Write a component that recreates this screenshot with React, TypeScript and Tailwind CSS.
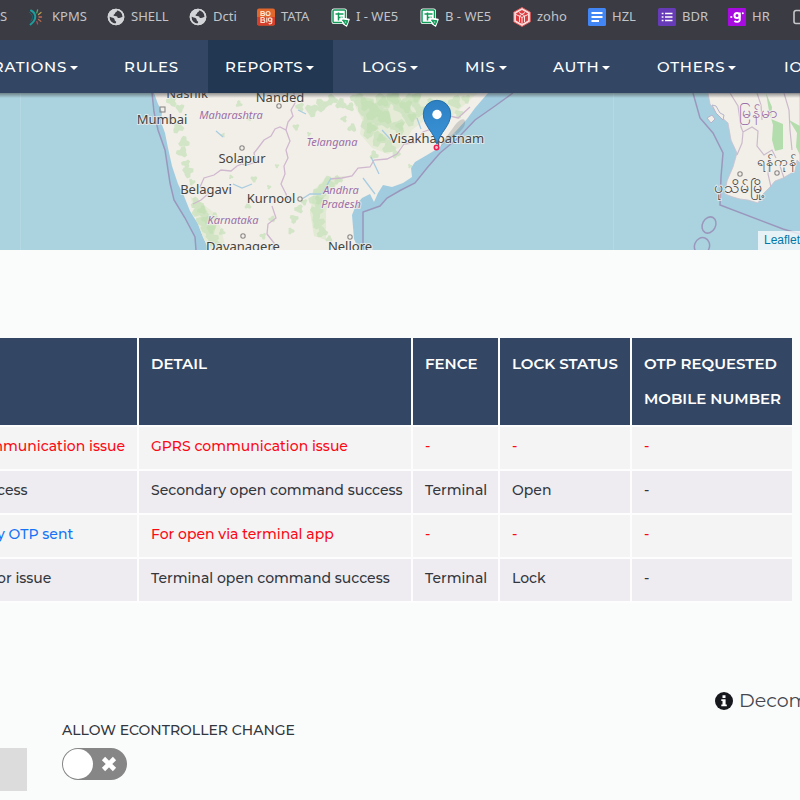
import React from "react";

const GlobeIcon = () => (
  <svg viewBox="0 0 18 18" className="h-[18px] w-[18px]" aria-hidden="true">
    <circle cx="9" cy="9" r="8.300" fill="#d3d4d7" />
    <path
      d="M9.500 1.800C10.800 2.600 10 3.800 8.800 4.200 7.600 4.800 8.400 6 7 6.600 6 7.200 6.400 8 8 7.900 10 7.900 10.800 8.600 10.700 9.900 12.600 9.900 13.800 9.900 16 8.400 15.800 6 14.500 3.500 12 2.600ZM2.500 8.600C3.600 9.600 5.600 9.400 6.800 10.300 8.200 11.200 7 12.600 8.600 13.300 9.800 14 9 15 8.200 15.700 5 15.500 2.200 12.600 2.500 8.600Z"
      fill="#3b3c44"
    />
    <circle cx="9" cy="9" r="7.500" fill="none" stroke="#d3d4d7" strokeWidth="1.700" />
  </svg>
);

const SunIcon = () => (
  <svg viewBox="0 0 18 18" className="h-[18px] w-[18px]" aria-hidden="true" fill="none" strokeLinecap="round">
    <path d="M3 2.500C8 5 9.500 11 2.500 16.500" stroke="#1f9c9c" strokeWidth="2" />
    <path d="M1.500 4.500C5 7 5.500 10 3 13" stroke="#176c78" strokeWidth="1" />
    <path d="M8.800 4.800L9.600 1.800" stroke="#4fae6c" strokeWidth="1.300" />
    <path d="M10.500 6.500L13 4.500" stroke="#b9a04c" strokeWidth="1.300" />
    <path d="M11 9H13.500" stroke="#c96a55" strokeWidth="1.300" />
    <path d="M10.500 11.500L12.800 13.300" stroke="#b9694c" strokeWidth="1.300" />
    <path d="M8.800 13.500L9.600 16" stroke="#a7505a" strokeWidth="1.300" />
  </svg>
);

const TataIcon = () => (
  <svg viewBox="0 0 18 18" className="h-[18px] w-[18px]" aria-hidden="true">
    <rect width="18" height="17" y="0.500" rx="2" fill="#e2672c" />
    <path d="M0 9H18V15.500a2 2 0 0 1-2 2H2a2 2 0 0 1-2-2Z" fill="#d63f2b" />
    <g fill="none" stroke="#fde3cf" strokeWidth="1.200">
      <path d="M4 3.500V7.500H6.500C8 7.500 8 5.500 6.500 5.500H4 6.300C7.600 5.500 7.600 3.500 6.300 3.500Z" />
      <circle cx="11" cy="5.500" r="2" />
      <path d="M4 9.500V14.500H6.500C8.300 14.500 8.300 12 6.500 12H4 6.200C7.700 12 7.700 9.500 6.200 9.500ZM9.800 9.500V14.500" />
      <circle cx="13" cy="11.600" r="1.700" />
      <path d="M14.700 10V14.500C14.700 16 12.400 16 11.700 15.400" />
    </g>
  </svg>
);

const SheetIcon = () => (
  <svg viewBox="0 0 19 19" className="h-[19px] w-[19px]" aria-hidden="true">
    <rect x="0.500" y="0.500" width="15.500" height="15.500" rx="2.500" fill="#fff" />
    <rect x="2" y="2" width="12.500" height="12.500" rx="1" fill="none" stroke="#119a58" strokeWidth="1.500" />
    <path d="M4.500 6H12.500M7.500 4.500V12.500M7.500 9.500H12" stroke="#119a58" strokeWidth="1.500" />
    <path d="M10 10L18 11.500 15.500 18 12.500 16Z" fill="#fff" stroke="#fff" strokeWidth="1.500" strokeLinejoin="round" />
    <path d="M11.500 12L17 12.800 15 17Z" fill="#119a58" stroke="#119a58" strokeWidth="1" strokeLinejoin="round" />
    <path d="M13.700 13.500L15.400 13.700 14.900 15Z" fill="#fff" />
  </svg>
);

const ZohoIcon = () => (
  <svg viewBox="0 0 18 20" className="h-5 w-[18px]" aria-hidden="true">
    <path d="M9 .5L17.300 5.200V14.800L9 19.500.7 14.800V5.200Z" fill="#f8dcdc" stroke="#e25555" strokeWidth="1" />
    <path d="M9 3L15 6.500V13.500L9 17 3 13.500V6.500Z" fill="#dc3b3f" />
    <path d="M3 7.500L9 10.500 15 7.500M9 10.500V17M6 5.500L11.500 8.800V15M12 5.500L6.500 8.800V15" fill="none" stroke="#fbe4e4" strokeWidth="1" />
  </svg>
);

const DocIcon = () => (
  <svg viewBox="0 0 18 18" className="h-[18px] w-[18px]" aria-hidden="true">
    <rect width="18" height="18" rx="1.500" fill="#4285f4" />
    <path d="M3.500 5H14.500M3.500 9H14.500M3.500 13H11" stroke="#fff" strokeWidth="2" />
  </svg>
);

const FormIcon = () => (
  <svg viewBox="0 0 18 18" className="h-[18px] w-[18px]" aria-hidden="true">
    <rect width="18" height="18" rx="1.500" fill="#673ab7" />
    <path d="M7 5.500H14.500M7 9H14.500M7 12.500H14.500M3.700 5.500H5.500M3.700 9H5.500M3.700 12.500H5.500" stroke="#fff" strokeWidth="1.700" />
  </svg>
);

const HrIcon = () => (
  <svg viewBox="0 0 18 18" className="h-[18px] w-[18px]" aria-hidden="true">
    <rect width="18" height="18" rx="1" fill="#a70be0" />
    <circle cx="9" cy="7.500" r="2.500" fill="none" stroke="#fff" strokeWidth="2" />
    <path d="M11.800 4.500V11.500C11.800 14.500 7.500 14.300 6.500 12.700" fill="none" stroke="#fff" strokeWidth="1.900" />
    <circle cx="3.300" cy="9" r="1.100" fill="#fff" />
    <circle cx="14.800" cy="5.300" r="1" fill="#fff" />
  </svg>
);

const FolderIcon = () => (
  <svg viewBox="0 0 18 18" className="h-[18px] w-[18px]" aria-hidden="true">
    <path d="M1 4.500a2 2 0 0 1 2-2H7L9 4.500H15a2 2 0 0 1 2 2V13.500a2 2 0 0 1-2 2H3a2 2 0 0 1-2-2Z" fill="none" stroke="#c6c7ca" strokeWidth="1.600" />
  </svg>
);

const bookmarks = [
  { label: "KPMS", icon: <SunIcon />, width: "w-[79px]" },
  { label: "SHELL", icon: <GlobeIcon />, width: "w-[82px]" },
  { label: "Dcti", icon: <GlobeIcon />, width: "w-[68px]" },
  { label: "TATA", icon: <TataIcon />, width: "w-[74px]" },
  { label: "I - WE5", icon: <SheetIcon />, width: "w-[89px]" },
  { label: "B - WE5", icon: <SheetIcon />, width: "w-[93px]" },
  { label: "zoho", icon: <ZohoIcon />, width: "w-[75px]" },
  { label: "HZL", icon: <DocIcon />, width: "w-[70px]" },
  { label: "BDR", icon: <FormIcon />, width: "w-[70px]" },
  { label: "HR", icon: <HrIcon />, width: "w-[65px]" },
  { label: "", icon: <FolderIcon />, width: "w-[18px]" },
];

const navItems = [
  { label: "RATIONS", caret: true, active: false, width: "w-[123px]" },
  { label: "RULES", caret: false, active: false, width: "w-[89px]" },
  { label: "REPORTS", caret: true, active: true, width: "w-[125px]" },
  { label: "LOGS", caret: true, active: false, width: "w-[91px]" },
  { label: "MIS", caret: true, active: false, width: "w-[76px]" },
  { label: "AUTH", caret: true, active: false, width: "w-[92px]" },
  { label: "OTHERS", caret: true, active: false, width: "w-[115px]" },
  { label: "IO", caret: false, active: false, width: "w-[66px]" },
];

const events = [
  { event: "mmunication issue", detail: "GPRS communication issue", fence: "-", lock: "-", otp: "-", alert: true, tone: "text-[#fb0a14]" },
  { event: "cess", detail: "Secondary open command success", fence: "Terminal", lock: "Open", otp: "-", alert: false, tone: "" },
  { event: "y OTP sent", detail: "For open via terminal app", fence: "-", lock: "-", otp: "-", alert: true, tone: "text-[#1573f6]" },
  { event: "or issue", detail: "Terminal open command success", fence: "Terminal", lock: "Lock", otp: "-", alert: false, tone: "" },
];

/* Small irregular patches of woodland; each is [x, y, size]. */
const woods: number[][] = [
  [172, 101, 5], [180, 108, 4], [170, 120, 3], [178, 128, 5], [184, 142, 5], [182, 152, 5], [186, 164, 4], [188, 172, 5], [192, 182, 3],
  [196, 203, 5], [200, 211, 7], [204, 221, 7], [209, 230, 7], [212, 239, 6], [218, 246, 5], [222, 232, 3], [214, 217, 4],
  [300, 107, 4], [312, 110, 6], [322, 105, 6], [332, 100, 5], [341, 104, 5], [350, 107, 4], [357, 99, 6], [364, 105, 9], [372, 113, 11],
  [381, 103, 8], [392, 99, 9], [404, 107, 9], [414, 99, 7], [369, 129, 8], [379, 139, 7], [389, 147, 6], [383, 119, 9], [398, 127, 7],
  [410, 118, 7], [420, 110, 6], [431, 104, 5], [443, 108, 6], [455, 102, 6], [466, 99, 4], [459, 114, 4], [396, 154, 4], [374, 155, 4],
  [352, 128, 4], [344, 119, 3], [296, 127, 3], [309, 134, 2], [338, 180, 4], [328, 183, 6], [320, 191, 6], [317, 201, 7], [317, 212, 6],
  [318, 222, 6], [322, 232, 5], [329, 239, 3], [299, 209, 4], [304, 202, 3], [294, 219, 4], [291, 231, 3], [239, 104, 3], [249, 119, 2],
  [223, 135, 2], [254, 179, 3], [269, 187, 2], [231, 177, 2], [248, 206, 3], [272, 219, 3], [263, 236, 3], [277, 166, 2], [410, 166, 2],
];

const patch = ([x, y, r]: number[], i: number) => {
  const points: string[] = [];
  for (let k = 0; k < 11; k++) {
    const angle = (k / 11) * Math.PI * 2;
    const reach = r * (0.55 + 0.75 * Math.abs(Math.sin(i * 3.7 + k * 2.3)));
    points.push(`${(x + Math.cos(angle) * reach).toFixed(1)},${(y + Math.sin(angle) * reach).toFixed(1)}`);
  }
  return points.join(" ");
};

const halo = { paintOrder: "stroke" as const };

const MapView = () => (
  <section aria-label="Vehicle map" className="relative h-[157px] overflow-hidden bg-[#aad3df]">
    <svg viewBox="0 93 800 157" className="block h-[157px] w-[800px] max-w-none" fontFamily="'Noto Sans', 'Open Sans', sans-serif" fontSize="13">
      <defs>
        <linearGradient id="pin" x1="0" y1="0" x2="0" y2="1">
          <stop offset="0" stopColor="#2d80c2" />
          <stop offset="1" stopColor="#3a94d8" />
        </linearGradient>
        <linearGradient id="navShade" x1="0" y1="0" x2="0" y2="1">
          <stop offset="0" stopColor="#333" stopOpacity="0.5" />
          <stop offset="1" stopColor="#333" stopOpacity="0" />
        </linearGradient>
        <clipPath id="indiaLand">
          <path d="M154 93L158 104 162 112 161 122 165 133 168 148 172 166 178 184 184 196 190 211 198 224 203 237 209 250H359L354 239 352 215 356 205 362 198 370 194 374 202 378 193 383 185 392 187 403 183 412 177 411 168 415 162 427 155 437 149 447 140 457 130 467 119 475 108 488 93Z" />
        </clipPath>
      </defs>
      <path d="M20.500 93V250M613.500 93V250" stroke="#b4d9e4" strokeWidth="1" />
      <path d="M152 93L158 130 165 150 170 183 174 200 185 218 195 237 196 250H363V212L380 206 387 198 415 183 440 153 475 120 513 93" fill="#a1cce0" />
      <path d="M693 93L700 118 713 133 723 153 721 177 720 205 783 229 800 234V93Z" fill="#a6d0df" />
      <g clipPath="url(#indiaLand)">
        <rect x="140" y="90" width="360" height="162" fill="#f2efe9" />
        <path d="M356 93L354 104 362 120 360 134 372 148 388 154 402 146 412 130 428 118 452 116 478 93Z" fill="#e6ecd8" />
        <path d="M190 196L200 202 216 214 222 232 226 250H205Z" fill="#e6ecd8" />
        <path d="M345 176L326 178 314 190 310 212 314 236 326 240 326 212 330 192Z" fill="#e2ead3" />
        <g fill="#cbe3be" opacity="0.800">
          {woods.map((w, i) => (
            <polygon key={i} points={patch(w, i)} />
          ))}
        </g>
        <g fill="#bcdcae" opacity="0.500">
          {woods.filter((w) => w[2] > 6).map((w, i) => (
            <polygon key={i} points={patch([w[0] + 2, w[1] - 1, w[2] - 3], i + 5)} />
          ))}
        </g>
        <g fill="none" stroke="#d0b8cf" strokeWidth="1.300">
          <path d="M294 93L295 103 291 110 293 116 288 122 286 130 280 127 275 129 271 136 264 140 258 148 254 153 256 162 246 165 242 164 237 166 231 171 221 170 214 175 204 178 200 187 208 194 201 200 193 204" />
          <path d="M286 130L290 141 286 150 288 158 284 166 285 174 281 184 286 194 288 200M272 206L276 218 268 224 267 234 274 243 272 250" />
          <path d="M330 179L342 178 352 176 358 168 370 167 374 160 387 159 397 154 404 144 415 143 423 132 434 128 446 115 458 118 470 107" />
        </g>
        <g fill="none" stroke="#a9cde0" strokeWidth="1.300">
          <path d="M302 199L310 194 322 194 331 178M216 131L223 137M233 184L242 188 252 184M298 110L306 114M371 157L379 174M363 178L375 194M421 129L417 118M382 130L391 140" />
        </g>
      </g>
      <g fill="none" stroke="#9b97bc" strokeWidth="1.500">
        <path d="M152 93L154 112 158 130 165 150 170 183 174 200 185 218 195 237 196 250" />
        <path d="M363 250V212L380 206 387 198 401 190 415 183 427 168 440 153 458 138 475 120 495 106 513 93" />
        <path d="M693 93L700 118 713 133 723 153 721 177 720 205 783 229 800 234" />
        <ellipse cx="709" cy="225" rx="6.500" ry="8.500" transform="rotate(28 709 225)" />
        <ellipse cx="702" cy="246" rx="7.500" ry="8.500" transform="rotate(20 702 246)" />
      </g>
      <path d="M708 93H800V163L797 160 795 171 783 178 775 181 770 187 763 194 758 203 748 200 740 199 733 197 725 194 727 181 733 167 737 153 731 140 728 123 717 113 710 104Z" fill="#f2efe9" stroke="#c9c0d0" strokeWidth="0.800" />
      <path d="M712 105l4 1 4 7 4 2-1 5-7-7zM707 118l5-3 3 4-4 4z" fill="#f2efe9" stroke="#b5b3cc" />
      <path d="M766 93L772 107 771 119 783 124V149L775 151 772 140 773 125 769 111Z" fill="#b4ddad" />
      <path d="M789 120L800 126V155L796 147 797 133Z" fill="#b4ddad" />
      <g fill="none" stroke="#cbbacb" strokeWidth="1.200">
        <path d="M730 93L738 106 741 127 743 132 742 143 737 155M743 132L752 127 758 131 757 146 764 155 772 150 776 158M757 93L761 105 762 120M784 93L789 110 790 130 792 150M771 187L768 174 770 160M784 178L780 166" />
      </g>
      <g fill="none" stroke="#8b8988" strokeWidth="1.100">
        <rect x="160" y="107" width="5" height="5" />
        <circle cx="279" cy="106" r="2.200" />
        <circle cx="242" cy="148" r="2.200" />
        <circle cx="300" cy="199" r="2.200" />
        <circle cx="243" cy="236" r="2.200" />
        <circle cx="350" cy="237" r="2.200" />
        <circle cx="740" cy="174" r="2.200" />
        <circle cx="777" cy="173" r="2.200" />
      </g>
      <g fill="#45443f" stroke="#f4f2ee" strokeWidth="2" strokeOpacity="0.700" fontSize="13" textAnchor="middle" style={halo}>
        <text x="187" y="98">Nashik</text>
        <text x="280" y="102">Nanded</text>
        <text x="162" y="124">Mumbai</text>
        <text x="242" y="163">Solapur</text>
        <text x="206" y="194">Belagavi</text>
        <text x="271" y="203">Kurnool</text>
        <text x="243" y="251">Davanagere</text>
        <text x="350" y="251">Nellore</text>
        <text x="437" y="143">Visakhapatnam</text>
        <text x="777" y="166" fontSize="14">ရန်ကုန်</text>
        <text x="739" y="193" fontSize="16">ပုသိမ်မြို့</text>
      </g>
      <g fill="#9b6fa5" stroke="#f4f2ee" strokeWidth="2" strokeOpacity="0.700" fontSize="11" fontStyle="italic" textAnchor="middle" style={halo}>
        <text x="231" y="119">Maharashtra</text>
        <text x="332" y="146">Telangana</text>
        <text x="341" y="194">Andhra</text>
        <text x="341" y="208">Pradesh</text>
        <text x="233" y="224">Karnataka</text>
        <text x="758" y="118" fontSize="16" fontStyle="normal">မြန်မာ</text>
      </g>
      <path d="M441 144L453 128C459 119 466 116 465 124 463 132 450 139 441 146Z" fill="#666" opacity="0.250" />
      <circle cx="436.500" cy="147.500" r="2.200" fill="#f5c9d4" stroke="#ee1c4e" strokeWidth="1.500" />
      <path d="M437 144C434 132 423.300 126 423.300 114A13.700 13.700 0 0 1 450.700 114C450.700 126 440 132 437 144Z" fill="url(#pin)" stroke="#2571ad" strokeWidth="1" />
      <circle cx="437" cy="114.500" r="4.700" fill="#fff" />
      <rect x="0" y="93" width="800" height="5" fill="url(#navShade)" />
    </svg>
    <div className="absolute right-0 bottom-0 h-[19px] w-[42px] overflow-hidden bg-white/70 pl-[6px] text-[12px] leading-[18px] whitespace-nowrap">
      <a href="#leaflet" className="font-['Liberation_Sans',sans-serif] text-[#0078a8]">Leaflet</a>
    </div>
  </section>
);

const head = "h-[89px] border-r-2 border-b-2 border-[#fdfdfe] pt-2 pr-2 pl-3 align-top text-left text-[15px] leading-[35px] font-semibold last:border-r-0";
const cell = "h-11 border-r-2 border-b-2 border-[#fdfdfe] pt-[9px] pr-2 pl-3 align-top leading-[21px] whitespace-nowrap last:border-r-0";

export default function App() {
  return (
    <div className="min-h-screen overflow-hidden bg-[#fafcfb] font-['Montserrat','Inter',sans-serif] text-[#33373d]">
      <nav aria-label="Bookmarks" className="flex h-10 items-center bg-[#3a3b43] pb-[6px] font-['Noto_Sans',sans-serif] text-[13px] text-[#c3c4c8]">
        <a href="#s" className="w-7 shrink-0">S</a>
        {bookmarks.map((b, i) => (
          <a key={i} href="#bookmark" aria-label={b.label || "Folder"} className={`flex shrink-0 items-center gap-[6px] whitespace-nowrap ${b.width}`}>
            {b.icon}
            {b.label}
          </a>
        ))}
      </nav>

      <nav aria-label="Main" className="flex h-[53px] overflow-hidden bg-[#334764] text-[15px] font-medium tracking-wider text-white">
        <div className="-ml-7 flex shrink-0 gap-3">
          {navItems.map((n) => (
            <button
              key={n.label}
              type="button"
              className={`flex shrink-0 items-center gap-[3px] pt-[2px] pr-[17px] whitespace-nowrap ${n.width} ${n.label === "RATIONS" ? "justify-end" : "pl-[17px]"} ${n.active ? "bg-[#213752]" : ""}`}
            >
              {n.label}
              {n.caret && <span className="border-x-4 border-t-4 border-x-transparent border-t-white" />}
            </button>
          ))}
        </div>
      </nav>

      <MapView />

      <main>
        <div className="mt-[88px] mr-2">
          <table className="w-full table-fixed border-separate border-spacing-0 text-[14px] font-medium">
            <colgroup>
              <col className="w-[139px]" />
              <col className="w-[274px]" />
              <col className="w-[87px]" />
              <col className="w-[132px]" />
              <col />
            </colgroup>
            <thead className="bg-[#334764] text-white">
              <tr>
                <th className={head}></th>
                <th className={head}>DETAIL</th>
                <th className={head}>FENCE</th>
                <th className={head}>LOCK STATUS</th>
                <th className={head}>OTP REQUESTED MOBILE NUMBER</th>
              </tr>
            </thead>
            <tbody>
              {events.map((e, i) => (
                <tr key={e.detail} className={`${i % 2 ? "bg-[#efecf1]" : "bg-[#f4f4f4]"} ${e.alert ? "text-[#fb0a14]" : ""}`}>
                  <td className={`h-11 border-r-2 border-b-2 border-[#fdfdfe] pt-[9px] align-top leading-[21px] whitespace-nowrap ${e.tone}`}>
                    <div className={`flex pr-3 ${i === 0 ? "justify-end" : "-ml-[3px]"}`}>
                      <span className="shrink-0">{e.event}</span>
                    </div>
                  </td>
                  <td className={cell}>{e.detail}</td>
                  <td className={cell}>{e.fence}</td>
                  <td className={cell}>{e.lock}</td>
                  <td className={cell}>{e.otp}</td>
                </tr>
              ))}
            </tbody>
          </table>
        </div>

        <div className="mt-[84px] flex h-7 items-center justify-end overflow-hidden">
          <div className="flex w-[85px] items-center gap-[6px] text-[19px] whitespace-nowrap text-[#44474e]">
            <svg viewBox="0 0 18 18" className="h-[18px] w-[18px] shrink-0" aria-hidden="true">
              <circle cx="9" cy="9" r="9" fill="#16181d" />
              <path d="M7.500 3.200H10.500V6H7.500ZM6.300 7.300H10.600V12.500H11.800V14.300H6.300V12.500H7.500V9.100H6.300Z" fill="#fff" />
            </svg>
            <span>Decom</span>
          </div>
        </div>

        <div className="mt-[5px] flex items-end gap-[35px]">
          <input aria-label="Value" disabled className="h-[43px] w-[27px] bg-[#dcdcdc]" />
          <div className="flex h-[71px] flex-col gap-[7px]">
            <label htmlFor="econtroller" className="text-[14px] leading-[21px] font-medium">ALLOW ECONTROLLER CHANGE</label>
            <div className="relative h-8 w-[65px]">
              <input
                id="econtroller"
                type="checkbox"
                className="peer h-8 w-[65px] appearance-none rounded-full bg-[#868686] checked:bg-[#3d8b5a]"
              />
              <span className="pointer-events-none absolute top-px left-px h-[30px] w-[30px] rounded-full bg-white peer-checked:left-[34px]" />
              <svg viewBox="0 0 16 16" className="pointer-events-none absolute top-2 left-[39px] h-4 w-4 peer-checked:hidden" aria-hidden="true">
                <path d="M2.500 2.500L13.500 13.500M13.500 2.500L2.500 13.500" stroke="#fff" strokeWidth="4.600" />
              </svg>
            </div>
          </div>
        </div>
      </main>
    </div>
  );
}
